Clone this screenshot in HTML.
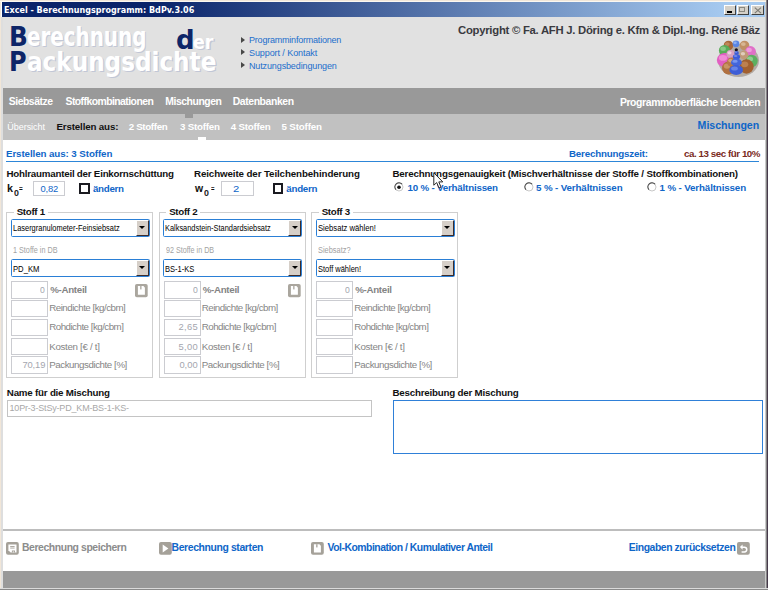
<!DOCTYPE html>
<html lang="de">
<head>
<meta charset="utf-8">
<title>Excel - Berechnungsprogramm: BdPv.3.06</title>
<style>
html,body{margin:0;padding:0;}
body{width:768px;height:590px;overflow:hidden;background:#fff;font-family:"Liberation Sans",sans-serif;font-size:10px;color:#000;position:relative;}
#win{position:absolute;left:0;top:0;width:768px;height:590px;overflow:hidden;background:#fff;}
#win div,#win span.t,#win svg{position:absolute;}
.t{white-space:nowrap;line-height:1;}
/* window chrome */
#title{left:2px;top:2px;width:763.5px;height:15px;background:linear-gradient(to right,#0a246a 0%,#0a246a 20%,#a6caf0 95%,#a6caf0 100%);}
.wb{top:2.5px;height:10.5px;background:#d4d0c8;box-sizing:border-box;border:1px solid;border-color:#fff #404040 #404040 #fff;}
#header{left:2px;top:17px;width:763.5px;height:71px;background:#e1e1e1;}
#nav{left:2px;top:88px;width:763.5px;height:26px;background:#999;}
#subnav{left:2px;top:114px;width:763.5px;height:25.7px;background:#c1c1c1;}
#footline{left:2px;top:528.5px;width:763.5px;height:2.5px;background:#bdbdbd;}
#footbar{left:2px;top:571.2px;width:762.9px;height:16.7px;background:#999;}
#frameL0{left:0;top:0;width:1.3px;height:590px;background:#f1e6d8;}
#frameL1{left:1.3px;top:17px;width:1.5px;height:573px;background:#dedede;}
#frameT{left:0;top:0;width:768px;height:2.4px;background:linear-gradient(#f1e6d8 0,#f1e6d8 50%,#fbf8f2 50%,#fbf8f2 100%);}
#frameR0{left:765.3px;top:2px;width:1px;height:588px;background:#cacaca;}
#frameR1{left:766.2px;top:0;width:1.8px;height:590px;background:linear-gradient(to right,#868686 0,#868686 45%,#46394a 45%,#46394a 100%);}
#frameB{left:0;top:587.8px;width:768px;height:2.2px;background:linear-gradient(#dadada 0,#dadada 55%,#8a8a8a 55%,#8a8a8a 100%);}
/* logo */
.logo{font-family:"DejaVu Sans Condensed","DejaVu Sans",sans-serif;font-weight:bold;color:#fff;text-shadow:1.3px 1.3px 0.5px #c2c7d6;}
.logo.n{color:#0d2568;text-shadow:none;}
.arrow{width:0;height:0;border-left:4.2px solid #484848;border-top:3.3px solid transparent;border-bottom:3.3px solid transparent;}
/* form */
.box{box-sizing:border-box;border:1px solid #cbccd1;background:#fff;}
.cb{box-sizing:border-box;border:2px solid #1a1a20;background:#fff;}
.fs{box-sizing:border-box;border:1px solid #cfcfcf;}
.lg{background:#fff;height:4px;}
.sel{box-sizing:border-box;border:1.3px solid #2a7fd6;background:#fff;border-radius:1.5px;}
.dd{box-sizing:border-box;background:#d6cfc8;border:1px solid;border-color:#fff #3c2c2c #3c2c2c #fff;}
.dd:after{content:"";position:absolute;left:2.4px;top:5.2px;border-top:3.4px solid #000;border-left:3px solid transparent;border-right:3px solid transparent;}
.ta{box-sizing:border-box;border:1px solid #2f80d8;background:#fff;}
</style>
</head>
<body>
<div id="win">
<div id="title">
<div class="wb" style="left:722px;width:11.5px"><div style="left:2px;top:5.5px;width:4.5px;height:1.6px;background:#000"></div></div>
<div class="wb" style="left:734.5px;width:12px"><div style="left:1.6px;top:1px;width:6.4px;height:5.8px;box-sizing:border-box;border:1px solid #8a8880;border-top:1.8px solid #8a8880"></div></div>
<div class="wb" style="left:749px;width:12.5px"><svg style="left:1.5px;top:1px" width="8" height="7" viewBox="0 0 8 7"><path d="M0.8 0.6 L7 6.2 M7 0.6 L0.8 6.2" stroke="#7c7a74" stroke-width="1.1" fill="none"/></svg></div>
</div>
<div id="header"></div>
<div id="nav"></div>
<div id="subnav"></div>
<div style="left:185px;top:114px;width:8.3px;height:3.7px;background:#999"></div>
<div style="left:198px;top:137px;width:8.2px;height:3px;background:#fff"></div>
<!-- logo -->
<span class="t logo n" style="left:9.1px;top:23.2px;font-size:27px;transform:scaleX(1.02);transform-origin:0 0">B</span><span class="t logo" style="left:27.2px;top:23.2px;font-size:27px;transform:scaleX(0.818);transform-origin:0 0">erechnung</span>
<span class="t logo n" style="left:176.4px;top:26px;font-size:27px;transform:scaleX(1.071);transform-origin:0 0">d</span><span class="t logo" style="left:193.4px;top:33.2px;font-size:19px;transform:scaleX(1.018);transform-origin:0 0">er</span>
<span class="t logo n" style="left:9.1px;top:47.9px;font-size:27px;transform:scaleX(0.987);transform-origin:0 0">P</span><span class="t logo" style="left:26.5px;top:47.9px;font-size:27px;transform:scaleX(0.952);transform-origin:0 0">ackungsdichte</span>
<div class="arrow" style="left:240.8px;top:36.6px"></div>
<div class="arrow" style="left:240.8px;top:49.4px"></div>
<div class="arrow" style="left:240.8px;top:62.3px"></div>
<svg style="left:715px;top:39px" width="46" height="40" viewBox="-2 -2 46 40"><ellipse cx="21.5" cy="19.5" rx="20.5" ry="16.5" fill="#7a6858" opacity="0.45"/><ellipse cx="11.5" cy="4.5" rx="4.8" ry="4.8" fill="#a8683a"/><ellipse cx="10.3" cy="3.1" rx="2.4" ry="1.9" fill="#d8a878" opacity="0.5"/><ellipse cx="27.5" cy="4.5" rx="4.8" ry="4.8" fill="#c09064"/><ellipse cx="26.3" cy="3.1" rx="2.4" ry="1.9" fill="#f0dcc0" opacity="0.5"/><ellipse cx="19" cy="2.8" rx="3.4" ry="3.4" fill="#5a86e4"/><ellipse cx="18.1" cy="1.8" rx="1.7" ry="1.4" fill="#c0d8ff" opacity="0.5"/><ellipse cx="7.5" cy="9.5" rx="5.6" ry="5.6" fill="#58ac58"/><ellipse cx="6.1" cy="7.8" rx="2.8" ry="2.2" fill="#b8e8b0" opacity="0.5"/><ellipse cx="33.5" cy="10.5" rx="5.4" ry="5.4" fill="#e070c8"/><ellipse cx="32.1" cy="8.9" rx="2.7" ry="2.2" fill="#ffc8f0" opacity="0.5"/><ellipse cx="34.5" cy="20" rx="6.2" ry="6.2" fill="#5cb060"/><ellipse cx="33.0" cy="18.1" rx="3.1" ry="2.5" fill="#c0ecc0" opacity="0.5"/><ellipse cx="8" cy="19" rx="8.2" ry="7" fill="#e25fc2"/><ellipse cx="6.0" cy="16.9" rx="4.1" ry="2.8" fill="#ffb8ec" opacity="0.5"/><ellipse cx="29.5" cy="25.5" rx="7.2" ry="7.2" fill="#a2602f"/><ellipse cx="27.7" cy="23.3" rx="3.6" ry="2.9" fill="#d8a070" opacity="0.5"/><ellipse cx="11.5" cy="27" rx="6.5" ry="6.5" fill="#b07040"/><ellipse cx="9.9" cy="25.1" rx="3.2" ry="2.6" fill="#e0b888" opacity="0.5"/><ellipse cx="27" cy="14" rx="4.4" ry="4.4" fill="#c09a78"/><ellipse cx="25.9" cy="12.7" rx="2.2" ry="1.8" fill="#fff" opacity="0.5"/><ellipse cx="13.5" cy="13" rx="4" ry="4" fill="#d8a0c0"/><ellipse cx="12.5" cy="11.8" rx="2.0" ry="1.6" fill="#fff" opacity="0.5"/><ellipse cx="14.5" cy="21" rx="4.5" ry="4.5" fill="#b87a48"/><ellipse cx="13.4" cy="19.6" rx="2.2" ry="1.8" fill="#f0d0a8" opacity="0.5"/><circle cx="19.3" cy="8.8" r="1.6" fill="#15101c"/><ellipse cx="19.6" cy="11.9" rx="2.3" ry="1.9" fill="#3c5cd8"/><ellipse cx="19.0" cy="11.3" rx="1.1" ry="0.8" fill="#a0b8ff" opacity="0.5"/><ellipse cx="19.5" cy="15.8" rx="3.7" ry="2.6" fill="#3c5cd8"/><ellipse cx="18.6" cy="15.0" rx="1.9" ry="1.0" fill="#a0b8ff" opacity="0.5"/><ellipse cx="19.4" cy="21.4" rx="5.4" ry="3.8" fill="#4466dc"/><ellipse cx="18.0" cy="20.3" rx="2.7" ry="1.5" fill="#b0c8ff" opacity="0.5"/><ellipse cx="19.2" cy="29" rx="6.8" ry="5" fill="#3e5ed6"/><ellipse cx="17.5" cy="27.5" rx="3.4" ry="2.0" fill="#90a8f8" opacity="0.5"/></svg>
<!-- content -->
<div style="left:6px;top:161px;width:753px;height:1.1px;background:#2d86d8"></div>
<div class="box" style="left:33px;top:181px;width:31.5px;height:15.3px"></div>
<div class="box" style="left:221.2px;top:181px;width:32.5px;height:15.3px"></div>
<div class="cb" style="left:79px;top:183px;width:10.6px;height:10.8px"></div>
<div class="cb" style="left:272.5px;top:183.4px;width:10.6px;height:10.6px"></div>
<svg style="left:394.4px;top:181.5px" width="10" height="10" viewBox="0 0 10 10"><circle cx="5" cy="5" r="4" fill="#fff" stroke="#c8c8c8" stroke-width="1"/><path d="M1.9 7.6 A4 4 0 0 1 8 2.2" fill="none" stroke="#4a4a4a" stroke-width="1.1"/><circle cx="5" cy="5.2" r="1.8" fill="#111"/></svg>
<svg style="left:523.7px;top:181.5px" width="10" height="10" viewBox="0 0 10 10"><circle cx="5" cy="5" r="4" fill="#fff" stroke="#c8c8c8" stroke-width="1"/><path d="M1.9 7.6 A4 4 0 0 1 8 2.2" fill="none" stroke="#4a4a4a" stroke-width="1.1"/></svg>
<svg style="left:647px;top:181.5px" width="10" height="10" viewBox="0 0 10 10"><circle cx="5" cy="5" r="4" fill="#fff" stroke="#c8c8c8" stroke-width="1"/><path d="M1.9 7.6 A4 4 0 0 1 8 2.2" fill="none" stroke="#4a4a4a" stroke-width="1.1"/></svg>
<div class="fs" style="left:6.4px;top:212.2px;width:146.9px;height:165.6px"></div>
<div class="lg" style="left:13.6px;top:210.5px;width:34.4px"></div>
<div class="sel" style="left:10.7px;top:218.9px;width:139.2px;height:18px"><div class="dd" style="right:0;top:0;width:13px;height:15.9px"></div></div>
<div class="sel" style="left:10.7px;top:259.2px;width:139.2px;height:17.7px"><div class="dd" style="right:0;top:0;width:13px;height:15.6px"></div></div>
<div class="box" style="left:11px;top:281.4px;width:37.3px;height:17.3px"></div>
<div class="box" style="left:11px;top:300.1px;width:37.3px;height:17.3px"></div>
<div class="box" style="left:11px;top:318.9px;width:37.3px;height:17.3px"></div>
<div class="box" style="left:11px;top:337.6px;width:37.3px;height:17.3px"></div>
<div class="box" style="left:11px;top:356.4px;width:37.3px;height:17.3px"></div>
<svg style="left:135.3px;top:283.7px" width="14" height="14" viewBox="0 0 14 14"><rect x="0" y="0" width="12.7" height="13.3" rx="1.8" fill="#aaa69e"/><path d="M2.9 2 H8.4 L9.9 3.5 V10.7 H2.9 Z" fill="#fff"/><rect x="5.2" y="2" width="1.3" height="3.4" fill="#aaa69e"/></svg>
<div class="fs" style="left:158.9px;top:212.2px;width:146.9px;height:165.6px"></div>
<div class="lg" style="left:166.1px;top:210.5px;width:34.4px"></div>
<div class="sel" style="left:163.2px;top:218.9px;width:139.2px;height:18px"><div class="dd" style="right:0;top:0;width:13px;height:15.9px"></div></div>
<div class="sel" style="left:163.2px;top:259.2px;width:139.2px;height:17.7px"><div class="dd" style="right:0;top:0;width:13px;height:15.6px"></div></div>
<div class="box" style="left:163.5px;top:281.4px;width:37.3px;height:17.3px"></div>
<div class="box" style="left:163.5px;top:300.1px;width:37.3px;height:17.3px"></div>
<div class="box" style="left:163.5px;top:318.9px;width:37.3px;height:17.3px"></div>
<div class="box" style="left:163.5px;top:337.6px;width:37.3px;height:17.3px"></div>
<div class="box" style="left:163.5px;top:356.4px;width:37.3px;height:17.3px"></div>
<svg style="left:287.8px;top:283.7px" width="14" height="14" viewBox="0 0 14 14"><rect x="0" y="0" width="12.7" height="13.3" rx="1.8" fill="#aaa69e"/><path d="M2.9 2 H8.4 L9.9 3.5 V10.7 H2.9 Z" fill="#fff"/><rect x="5.2" y="2" width="1.3" height="3.4" fill="#aaa69e"/></svg>
<div class="fs" style="left:311.4px;top:212.2px;width:146.9px;height:165.6px"></div>
<div class="lg" style="left:318.6px;top:210.5px;width:34.4px"></div>
<div class="sel" style="left:315.7px;top:218.9px;width:139.2px;height:18px"><div class="dd" style="right:0;top:0;width:13px;height:15.9px"></div></div>
<div class="sel" style="left:315.7px;top:259.2px;width:139.2px;height:17.7px"><div class="dd" style="right:0;top:0;width:13px;height:15.6px"></div></div>
<div class="box" style="left:316px;top:281.4px;width:37.3px;height:17.3px"></div>
<div class="box" style="left:316px;top:300.1px;width:37.3px;height:17.3px"></div>
<div class="box" style="left:316px;top:318.9px;width:37.3px;height:17.3px"></div>
<div class="box" style="left:316px;top:337.6px;width:37.3px;height:17.3px"></div>
<div class="box" style="left:316px;top:356.4px;width:37.3px;height:17.3px"></div>
<div class="box" style="left:7px;top:399.5px;width:365.3px;height:17.5px;border-color:#c4c4c4"></div>
<div class="ta" style="left:393px;top:400px;width:370.2px;height:53.7px"></div>
<div id="footline"></div>
<svg style="left:6.4px;top:541.5px" width="14" height="14" viewBox="0 0 14 14"><rect x="0" y="0" width="12.8" height="12.8" rx="2" fill="#a5a199"/><path d="M2.4 2.4 H10.5 V10.5 H4.6 L2.4 8.3 Z" fill="#fff"/><rect x="4.2" y="4" width="4.4" height="0.9" fill="#a5a199"/><rect x="4.2" y="5.6" width="4.4" height="0.9" fill="#a5a199"/><path d="M5.9 10.5 V8.6 H9 V10.5 H8.1 V9.4 H6.8 V10.5 Z" fill="#a5a199"/></svg>
<svg style="left:159px;top:541.5px" width="14" height="14" viewBox="0 0 14 14"><rect x="0" y="0" width="12.8" height="12.8" rx="2" fill="#a5a199"/><path d="M3.7 2.4 L9.4 6.4 L3.7 10.4 Z" fill="#fff"/></svg>
<svg style="left:310.8px;top:541.5px" width="14" height="14" viewBox="0 0 14 14"><rect x="0" y="0" width="12.8" height="12.8" rx="2" fill="#a5a199"/><path d="M2.9 2.2 H8.4 L9.9 3.7 V10.4 H2.9 Z" fill="#fff"/><rect x="5.2" y="2.2" width="1.3" height="3.2" fill="#a5a199"/></svg>
<svg style="left:737.3px;top:541.5px" width="14" height="14" viewBox="0 0 14 14"><rect x="0" y="0" width="12.8" height="12.8" rx="2" fill="#a5a199"/><path d="M5.6 2.4 L2.9 5.1 L5.6 7.8 V6 H7.4 A1.6 1.6 0 0 1 7.4 9.2 H4.6 V10.7 H7.4 A3.1 3.1 0 0 0 7.4 4.5 H5.6 Z" fill="#fff"/></svg>
<div id="footbar"></div>
<span class="t" style="left:3.59px;top:5.00px;color:#fff;font:bold 8.9px 'DejaVu Sans',sans-serif;letter-spacing:0px;transform:scaleX(0.9062);transform-origin:0 0;">Excel - Berechnungsprogramm: BdPv.3.06</span>
<span class="t" style="left:249.00px;top:34.80px;color:#1c6ecc;font:9px 'Liberation Sans',sans-serif;letter-spacing:-0.21px;">Programminformationen</span>
<span class="t" style="left:249.00px;top:47.80px;color:#1c6ecc;font:9px 'Liberation Sans',sans-serif;letter-spacing:-0.081px;">Support / Kontakt</span>
<span class="t" style="left:249.00px;top:60.70px;color:#1c6ecc;font:9px 'Liberation Sans',sans-serif;letter-spacing:-0.128px;">Nutzungsbedingungen</span>
<span class="t" style="left:458.00px;top:24.00px;color:#3a3a40;font:bold 11.3px 'Liberation Sans',sans-serif;letter-spacing:-0.254px;">Copyright © Fa. AFH J. Döring e. Kfm &amp; Dipl.-Ing. René Bäz</span>
<span class="t" style="left:8.75px;top:96.40px;color:#fff;font:bold 10.4px 'Liberation Sans',sans-serif;letter-spacing:-0.469px;">Siebsätze</span>
<span class="t" style="left:65.50px;top:96.40px;color:#fff;font:bold 10.4px 'Liberation Sans',sans-serif;letter-spacing:-0.544px;">Stoffkombinationen</span>
<span class="t" style="left:165.25px;top:96.40px;color:#fff;font:bold 10.4px 'Liberation Sans',sans-serif;letter-spacing:-0.444px;">Mischungen</span>
<span class="t" style="left:232.75px;top:96.40px;color:#fff;font:bold 10.4px 'Liberation Sans',sans-serif;letter-spacing:-0.4px;">Datenbanken</span>
<span class="t" style="left:619.90px;top:96.70px;color:#fff;font:bold 10.4px 'Liberation Sans',sans-serif;letter-spacing:-0.376px;">Programmoberfläche beenden</span>
<span class="t" style="left:7.25px;top:121.80px;color:#fff;font:9px 'Liberation Sans',sans-serif;letter-spacing:-0.031px;">Übersicht</span>
<span class="t" style="left:56.50px;top:121.00px;color:#111;font:bold 9.75px 'Liberation Sans',sans-serif;letter-spacing:-0.154px;">Erstellen aus:</span>
<span class="t" style="left:128.75px;top:121.00px;color:#fff;font:bold 9.75px 'Liberation Sans',sans-serif;letter-spacing:-0.344px;">2 Stoffen</span>
<span class="t" style="left:180.00px;top:121.00px;color:#fff;font:bold 9.75px 'Liberation Sans',sans-serif;letter-spacing:-0.219px;">3 Stoffen</span>
<span class="t" style="left:230.75px;top:121.00px;color:#fff;font:bold 9.75px 'Liberation Sans',sans-serif;letter-spacing:-0.219px;">4 Stoffen</span>
<span class="t" style="left:281.50px;top:121.00px;color:#fff;font:bold 9.75px 'Liberation Sans',sans-serif;letter-spacing:-0.156px;">5 Stoffen</span>
<span class="t" style="left:697.60px;top:118.90px;color:#0f66c8;font:bold 10.6px 'Liberation Sans',sans-serif;letter-spacing:-0.022px;">Mischungen</span>
<span class="t" style="left:6.00px;top:148.00px;color:#0f66c8;font:bold 9.75px 'Liberation Sans',sans-serif;letter-spacing:-0.087px;">Erstellen aus: 3 Stoffen</span>
<span class="t" style="left:569.00px;top:148.00px;color:#0f66c8;font:bold 9.75px 'Liberation Sans',sans-serif;letter-spacing:-0.183px;">Berechnungszeit:</span>
<span class="t" style="left:684.00px;top:148.00px;color:#7a2a1c;font:bold 9.75px 'Liberation Sans',sans-serif;letter-spacing:-0.441px;">ca. 13 sec für 10%</span>
<span class="t" style="left:6.50px;top:168.40px;color:#111;font:bold 9.75px 'Liberation Sans',sans-serif;letter-spacing:-0.221px;">Hohlraumanteil der Einkornschüttung</span>
<span class="t" style="left:194.00px;top:168.40px;color:#111;font:bold 9.75px 'Liberation Sans',sans-serif;letter-spacing:-0.106px;">Reichweite der Teilchenbehinderung</span>
<span class="t" style="left:392.50px;top:168.20px;color:#111;font:bold 9.75px 'Liberation Sans',sans-serif;letter-spacing:-0.171px;">Berechnungsgenauigkeit (Mischverhältnisse der Stoffe / Stoffkombinationen)</span>
<span class="t" style="left:6.74px;top:183.00px;color:#111;font:bold 10.2px 'Liberation Sans',sans-serif;letter-spacing:0px;transform:scaleX(1.0600);transform-origin:0 0;">k</span>
<span class="t" style="left:13.80px;top:187.70px;color:#222;font:bold 8.6px 'Liberation Sans',sans-serif;letter-spacing:0px;transform:scaleX(1.0250);transform-origin:0 0;">0</span>
<span class="t" style="left:18.50px;top:184.60px;color:#111;font:bold 6.5px 'Liberation Sans',sans-serif;letter-spacing:0px;transform:scaleX(0.9750);transform-origin:0 0;">=</span>
<span class="t" style="left:40.50px;top:182.60px;color:#0f66c8;font:9.4px 'Liberation Sans',sans-serif;letter-spacing:-0.167px;">0,82</span>
<span class="t" style="left:93.00px;top:182.50px;color:#0f66c8;font:bold 9.75px 'Liberation Sans',sans-serif;letter-spacing:-0.3px;">ändern</span>
<span class="t" style="left:195.20px;top:183.00px;color:#111;font:bold 10.2px 'Liberation Sans',sans-serif;letter-spacing:0px;transform:scaleX(1.0250);transform-origin:0 0;">w</span>
<span class="t" style="left:204.20px;top:187.70px;color:#222;font:bold 8.6px 'Liberation Sans',sans-serif;letter-spacing:0px;transform:scaleX(1.0250);transform-origin:0 0;">0</span>
<span class="t" style="left:210.50px;top:184.60px;color:#111;font:bold 6.5px 'Liberation Sans',sans-serif;letter-spacing:0px;transform:scaleX(0.9250);transform-origin:0 0;">=</span>
<span class="t" style="left:233.30px;top:182.60px;color:#0f66c8;font:9.4px 'Liberation Sans',sans-serif;letter-spacing:0px;transform:scaleX(1.2000);transform-origin:0 0;">2</span>
<span class="t" style="left:286.25px;top:182.50px;color:#0f66c8;font:bold 9.75px 'Liberation Sans',sans-serif;letter-spacing:-0.25px;">ändern</span>
<span class="t" style="left:407.50px;top:182.20px;color:#0f66c8;font:bold 9.75px 'Liberation Sans',sans-serif;letter-spacing:-0.197px;">10 % - Verhältnissen</span>
<span class="t" style="left:536.00px;top:182.20px;color:#0f66c8;font:bold 9.75px 'Liberation Sans',sans-serif;letter-spacing:-0.125px;">5 % - Verhältnissen</span>
<span class="t" style="left:659.50px;top:182.20px;color:#0f66c8;font:bold 9.75px 'Liberation Sans',sans-serif;letter-spacing:-0.125px;">1 % - Verhältnissen</span>
<span class="t" style="left:16.70px;top:206.30px;color:#111;font:bold 9.75px 'Liberation Sans',sans-serif;letter-spacing:-0.317px;">Stoff 1</span>
<span class="t" style="left:12.73px;top:222.80px;color:#000;font:8.6px 'Liberation Sans',sans-serif;letter-spacing:0px;transform:scaleX(0.8664);transform-origin:0 0;">Lasergranulometer-Feinsiebsatz</span>
<span class="t" style="left:12.74px;top:244.50px;color:#a2a2a2;font:8.4px 'Liberation Sans',sans-serif;letter-spacing:0px;transform:scaleX(0.8640);transform-origin:0 0;">1 Stoffe in DB</span>
<span class="t" style="left:12.71px;top:263.50px;color:#000;font:8.6px 'Liberation Sans',sans-serif;letter-spacing:0px;transform:scaleX(0.8929);transform-origin:0 0;">PD_KM</span>
<span class="t" style="left:50.20px;top:283.80px;color:#848484;font:bold 9.75px 'Liberation Sans',sans-serif;letter-spacing:-0.314px;">%-Anteil</span>
<span class="t" style="left:40.30px;top:283.80px;color:#a4a6ae;font:9.4px 'Liberation Sans',sans-serif;letter-spacing:0px;transform:scaleX(0.9200);transform-origin:0 0;">0</span>
<span class="t" style="left:49.20px;top:302.00px;color:#858585;font:9.75px 'Liberation Sans',sans-serif;letter-spacing:-0.5px;">Reindichte [kg/cbm]</span>
<span class="t" style="left:49.20px;top:321.10px;color:#858585;font:9.75px 'Liberation Sans',sans-serif;letter-spacing:-0.512px;">Rohdichte [kg/cbm]</span>
<span class="t" style="left:49.20px;top:340.50px;color:#858585;font:9.75px 'Liberation Sans',sans-serif;letter-spacing:-0.308px;">Kosten [€ / t]</span>
<span class="t" style="left:49.20px;top:359.00px;color:#858585;font:9.75px 'Liberation Sans',sans-serif;letter-spacing:-0.441px;">Packungsdichte [%]</span>
<span class="t" style="left:22.40px;top:359.00px;color:#a4a6ae;font:9.4px 'Liberation Sans',sans-serif;letter-spacing:-0.125px;">70,19</span>
<span class="t" style="left:169.20px;top:206.30px;color:#111;font:bold 9.75px 'Liberation Sans',sans-serif;letter-spacing:-0.317px;">Stoff 2</span>
<span class="t" style="left:165.24px;top:222.80px;color:#000;font:8.6px 'Liberation Sans',sans-serif;letter-spacing:0px;transform:scaleX(0.8612);transform-origin:0 0;">Kalksandstein-Standardsiebsatz</span>
<span class="t" style="left:166.10px;top:244.50px;color:#a2a2a2;font:8.4px 'Liberation Sans',sans-serif;letter-spacing:0px;transform:scaleX(0.8571);transform-origin:0 0;">92 Stoffe in DB</span>
<span class="t" style="left:165.22px;top:263.50px;color:#000;font:8.6px 'Liberation Sans',sans-serif;letter-spacing:0px;transform:scaleX(0.8750);transform-origin:0 0;">BS-1-KS</span>
<span class="t" style="left:202.70px;top:283.80px;color:#848484;font:bold 9.75px 'Liberation Sans',sans-serif;letter-spacing:-0.314px;">%-Anteil</span>
<span class="t" style="left:192.80px;top:283.80px;color:#a4a6ae;font:9.4px 'Liberation Sans',sans-serif;letter-spacing:0px;transform:scaleX(0.9200);transform-origin:0 0;">0</span>
<span class="t" style="left:201.70px;top:302.00px;color:#858585;font:9.75px 'Liberation Sans',sans-serif;letter-spacing:-0.5px;">Reindichte [kg/cbm]</span>
<span class="t" style="left:201.70px;top:321.10px;color:#858585;font:9.75px 'Liberation Sans',sans-serif;letter-spacing:-0.512px;">Rohdichte [kg/cbm]</span>
<span class="t" style="left:178.40px;top:321.10px;color:#a4a6ae;font:9.4px 'Liberation Sans',sans-serif;letter-spacing:0.333px;">2,65</span>
<span class="t" style="left:201.70px;top:340.50px;color:#858585;font:9.75px 'Liberation Sans',sans-serif;letter-spacing:-0.308px;">Kosten [€ / t]</span>
<span class="t" style="left:178.40px;top:340.50px;color:#a4a6ae;font:9.4px 'Liberation Sans',sans-serif;letter-spacing:0.333px;">5,00</span>
<span class="t" style="left:201.70px;top:359.00px;color:#858585;font:9.75px 'Liberation Sans',sans-serif;letter-spacing:-0.441px;">Packungsdichte [%]</span>
<span class="t" style="left:179.40px;top:359.00px;color:#a4a6ae;font:9.4px 'Liberation Sans',sans-serif;letter-spacing:0.0px;">0,00</span>
<span class="t" style="left:321.70px;top:206.30px;color:#111;font:bold 9.75px 'Liberation Sans',sans-serif;letter-spacing:-0.317px;">Stoff 3</span>
<span class="t" style="left:317.71px;top:222.80px;color:#000;font:8.6px 'Liberation Sans',sans-serif;letter-spacing:0px;transform:scaleX(0.8921);transform-origin:0 0;">Siebsatz wählen!</span>
<span class="t" style="left:317.71px;top:244.50px;color:#a2a2a2;font:8.4px 'Liberation Sans',sans-serif;letter-spacing:0px;transform:scaleX(0.8857);transform-origin:0 0;">Siebsatz?</span>
<span class="t" style="left:317.73px;top:263.50px;color:#000;font:8.6px 'Liberation Sans',sans-serif;letter-spacing:0px;transform:scaleX(0.8687);transform-origin:0 0;">Stoff wählen!</span>
<span class="t" style="left:355.20px;top:283.80px;color:#848484;font:bold 9.75px 'Liberation Sans',sans-serif;letter-spacing:-0.314px;">%-Anteil</span>
<span class="t" style="left:345.30px;top:283.80px;color:#a4a6ae;font:9.4px 'Liberation Sans',sans-serif;letter-spacing:0px;transform:scaleX(0.9200);transform-origin:0 0;">0</span>
<span class="t" style="left:354.20px;top:302.00px;color:#858585;font:9.75px 'Liberation Sans',sans-serif;letter-spacing:-0.5px;">Reindichte [kg/cbm]</span>
<span class="t" style="left:354.20px;top:321.10px;color:#858585;font:9.75px 'Liberation Sans',sans-serif;letter-spacing:-0.512px;">Rohdichte [kg/cbm]</span>
<span class="t" style="left:354.20px;top:340.50px;color:#858585;font:9.75px 'Liberation Sans',sans-serif;letter-spacing:-0.308px;">Kosten [€ / t]</span>
<span class="t" style="left:354.20px;top:359.00px;color:#858585;font:9.75px 'Liberation Sans',sans-serif;letter-spacing:-0.441px;">Packungsdichte [%]</span>
<span class="t" style="left:6.80px;top:386.80px;color:#111;font:bold 9.75px 'Liberation Sans',sans-serif;letter-spacing:-0.21px;">Name für die Mischung</span>
<span class="t" style="left:392.50px;top:387.00px;color:#111;font:bold 9.75px 'Liberation Sans',sans-serif;letter-spacing:-0.208px;">Beschreibung der Mischung</span>
<span class="t" style="left:9.50px;top:403.20px;color:#a8a8a8;font:9px 'Liberation Sans',sans-serif;letter-spacing:-0.18px;">10Pr-3-StSy-PD_KM-BS-1-KS-</span>
<span class="t" style="left:22.00px;top:542.10px;color:#8c8c8c;font:bold 10.4px 'Liberation Sans',sans-serif;letter-spacing:-0.408px;">Berechnung speichern</span>
<span class="t" style="left:171.50px;top:542.10px;color:#0f66c8;font:bold 10.4px 'Liberation Sans',sans-serif;letter-spacing:-0.368px;">Berechnung starten</span>
<span class="t" style="left:327.50px;top:542.10px;color:#0f66c8;font:bold 10.4px 'Liberation Sans',sans-serif;letter-spacing:-0.486px;">Vol-Kombination / Kumulativer Anteil</span>
<span class="t" style="left:628.75px;top:542.10px;color:#0f66c8;font:bold 10.4px 'Liberation Sans',sans-serif;letter-spacing:-0.425px;">Eingaben zurücksetzen</span>
<svg style="left:433.3px;top:172.2px" width="12" height="18" viewBox="0 0 12 18"><path d="M0.8 0.8 V13.2 L3.7 10.6 L6 16 L8 15.1 L5.8 9.9 H9.8 Z" fill="#fff" stroke="#2a2a2a" stroke-width="1" stroke-linejoin="miter"/></svg>
<div id="frameL0"></div><div id="frameL1"></div><div id="frameT"></div><div id="frameR0"></div><div id="frameR1"></div><div id="frameB"></div>
</div>
</body>
</html>
